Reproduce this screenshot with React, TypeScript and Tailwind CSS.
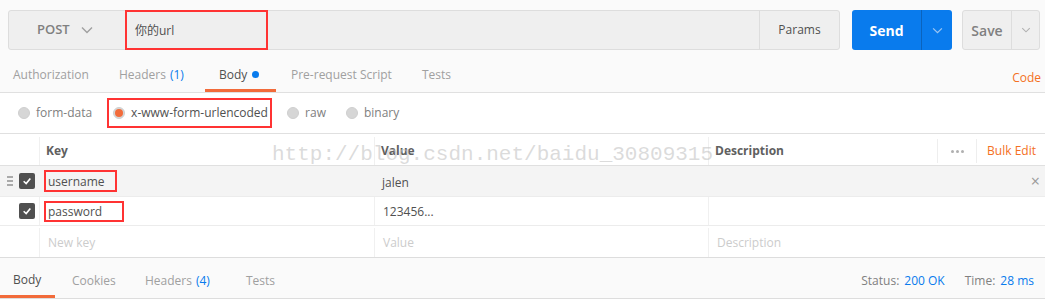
import React from "react";

const Chevron = ({ className }: { className?: string }) => (
  <svg viewBox="0 0 12 8" className={className} fill="none" stroke="currentColor" strokeWidth="1.4">
    <path d="M1 1.5 L6 6.5 L11 1.5" />
  </svg>
);

const Radio = ({ checked }: { checked?: boolean }) => (
  <span className="w-[12px] h-[12px] rounded-full bg-[#d6d6d6] border border-[#cfcfcf] flex items-center justify-center">
    {checked && <span className="w-[8px] h-[8px] rounded-full bg-[#f26b3a]" />}
  </span>
);

const Check = () => (
  <span className="w-[16px] h-[16px] rounded-[2px] bg-[#505050] flex items-center justify-center">
    <svg viewBox="0 0 12 12" className="w-[10px] h-[10px]" fill="none" stroke="#fff" strokeWidth="2">
      <path d="M2 6.3 L5 9 L10 3" />
    </svg>
  </span>
);

const App = () => {
  return (
    <div className="relative w-[1045px] h-[299px] overflow-hidden bg-[#fafafa] text-[12px] text-[#505050] font-['Open_Sans',sans-serif]">
      {/* request bar */}
      <div className="flex h-[40px] mt-[10px] ml-[8px] mr-[5px]">
        <div className="flex flex-1 bg-[#efefef] border border-[#dddddd] rounded-[3px]">
          <div className="w-[116px] flex items-center pl-[28px] gap-[11px] text-[#808080]">
            <span className="text-[13px] font-semibold">POST</span>
            <Chevron className="w-[12px] h-[8px] text-[#a0a0a0]" />
          </div>
          <div className="flex-1 flex items-stretch -my-px">
            <div className="w-[143px] border-2 border-[#ff3333] flex items-center pl-[8px] pt-[2px] text-[12px] text-[#505050] font-['Open_Sans','Noto_Sans_CJK_SC',sans-serif]">
              你的url
            </div>
          </div>
          <div className="w-[80px] border-l border-[#dddddd] flex items-center justify-center text-[#505050]">
            Params
          </div>
        </div>
        <div className="ml-[12px] flex w-[100px] bg-[#097bed] rounded-[3px] text-white">
          <div className="w-[69px] flex items-center justify-center text-[14px] font-bold">Send</div>
          <div className="flex-1 border-l border-[#0a63bd] flex items-center justify-center">
            <Chevron className="w-[11px] h-[7px] text-[#9cc6f3]" />
          </div>
        </div>
        <div className="ml-[10px] flex w-[78px] bg-[#efefef] border border-[#dddddd] rounded-[3px] text-[#808080]">
          <div className="w-[48px] flex items-center justify-center text-[14px] font-semibold">Save</div>
          <div className="flex-1 border-l border-[#dddddd] flex items-center justify-center">
            <Chevron className="w-[10px] h-[6px] text-[#b0b0b0]" />
          </div>
        </div>
      </div>

      {/* request tabs */}
      <div className="flex h-[43px] pt-[7px] border-b border-[#e0e0e0] text-[#a0a0a0]">
        <div className="w-[119px] pl-[13px] flex items-center">Authorization</div>
        <div className="w-[86px] flex items-center">
          Headers <span className="ml-[4px] text-[#097bed]">(1)</span>
        </div>
        <div className="w-[71px] pl-[14px] flex items-center border-b-[3px] border-[#f26b3a] pt-[3px] text-[#505050]">
          Body
          <span className="ml-[5px] w-[7px] h-[7px] rounded-full bg-[#097bed]" />
        </div>
        <div className="ml-[15px] w-[131px] flex items-center">Pre-request Script</div>
        <div className="flex items-center">Tests</div>
        <div className="ml-auto pr-[4px] flex items-center pt-[6px] text-[#f47023]">Code</div>
      </div>

      {/* body types */}
      <div className="flex items-center h-[41px] bg-white border-b border-[#e0e0e0] text-[#808080]">
        <div className="ml-[18px] flex items-center gap-[6px]">
          <Radio /> form-data
        </div>
        <div className="ml-[15px] h-[30px] w-[165px] border-2 border-[#ff3333] flex items-center pl-[4px] gap-[6px] text-[#505050]">
          <Radio checked /> x-www-form-urlencoded
        </div>
        <div className="ml-[15px] flex items-center gap-[6px]">
          <Radio /> raw
        </div>
        <div className="ml-[20px] flex items-center gap-[6px]">
          <Radio /> binary
        </div>
      </div>

      {/* table */}
      <div className="bg-white">
        <div className="flex h-[32px] pt-[3px] border-b border-[#e0e0e0] font-bold text-[#606060]">
          <div className="w-[40px] border-r border-[#f0f0f0]" />
          <div className="w-[334px] flex items-center pl-[6px]">Key</div>
          <div className="w-[334px] flex items-center pl-[6px] border-l border-[#f0f0f0]">Value</div>
          <div className="flex-1 flex items-center pl-[6px] border-l border-[#f0f0f0]">
            Description
            <div className="ml-auto h-[24px] w-[40px] border-l border-r border-[#eeeeee] flex items-center justify-center gap-[2px]">
              <span className="w-[3px] h-[3px] rounded-full bg-[#b0b0b0]" />
              <span className="w-[3px] h-[3px] rounded-full bg-[#b0b0b0]" />
              <span className="w-[3px] h-[3px] rounded-full bg-[#b0b0b0]" />
            </div>
            <span className="ml-[10px] mr-[9px] font-normal text-[#f47023]">Bulk Edit</span>
          </div>
        </div>

        <div className="flex h-[31px] bg-[#f4f4f4] border-b border-[#ececec] text-[#505050]">
          <div className="w-[40px] flex items-center pl-[7px] gap-[6px]">
            <span className="flex flex-col gap-[2px]">
              <span className="w-[6px] h-[2px] bg-[#aaaaaa]" />
              <span className="w-[6px] h-[2px] bg-[#aaaaaa]" />
              <span className="w-[6px] h-[2px] bg-[#aaaaaa]" />
            </span>
            <Check />
          </div>
          <div className="w-[334px] flex items-center pl-[4px]">
            <div className="h-[22px] w-[73px] border-2 border-[#ff3333] flex items-center pl-[2px] pt-[2px]">username</div>
          </div>
          <div className="w-[334px] flex items-center pl-[8px] pt-[3px]">jalen</div>
          <div className="flex-1 flex items-center justify-end pr-[5px] text-[#9a9a9a] text-[16px]">×</div>
        </div>

        <div className="flex h-[29px] border-b border-[#ececec] text-[#505050]">
          <div className="w-[40px] flex items-center pl-[19px] border-r border-[#f0f0f0]">
            <Check />
          </div>
          <div className="w-[334px] flex items-center pl-[4px]">
            <div className="h-[21px] w-[80px] border-2 border-[#ff3333] flex items-center pl-[2px] pt-[1px]">password</div>
          </div>
          <div className="w-[334px] flex items-center pl-[8px] pt-[2px] border-l border-[#f0f0f0]">123456...</div>
          <div className="flex-1 border-l border-[#f0f0f0]" />
        </div>

        <div className="flex h-[31px] pt-[2px] text-[#cccccc]">
          <div className="w-[40px] border-r border-[#f0f0f0]" />
          <div className="w-[334px] flex items-center pl-[8px]">New key</div>
          <div className="w-[334px] flex items-center pl-[8px] border-l border-[#f0f0f0]">Value</div>
          <div className="flex-1 flex items-center pl-[8px] border-l border-[#f0f0f0]">Description</div>
        </div>
      </div>

      {/* response tabs */}
      <div className="flex h-[42px] pt-[6px] border-t border-b border-[#dddddd] text-[#a0a0a0]">
        <div className="w-[55px] pl-[13px] flex items-center border-b-[3px] border-[#f26b3a] text-[#505050]">Body</div>
        <div className="ml-[17px] w-[73px] flex items-center">Cookies</div>
        <div className="w-[101px] flex items-center">
          Headers <span className="ml-[4px] text-[#097bed]">(4)</span>
        </div>
        <div className="flex items-center">Tests</div>
        <div className="ml-auto flex items-center text-[#808080]">
          Status: <span className="ml-[5px] text-[#097bed]">200 OK</span>
        </div>
        <div className="ml-[20px] mr-[11px] flex items-center text-[#808080]">
          Time: <span className="ml-[5px] text-[#097bed]">28 ms</span>
        </div>
      </div>

      {/* watermark */}
      <div className="absolute left-[272px] top-[144px] text-[21px] leading-none text-[#c4c4c4]/60 font-['Liberation_Mono',monospace] pointer-events-none">
        http://blog.csdn.net/baidu_30809315
      </div>
    </div>
  );
};

export default App;
